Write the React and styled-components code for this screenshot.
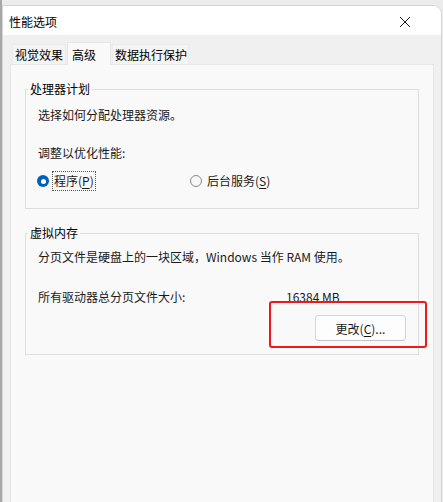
import React from "react";
import styled, { createGlobalStyle } from "styled-components";

const GlobalStyle = createGlobalStyle`
  html, body {
    margin: 0;
    padding: 0;
    background: #ececec;
  }
  body {
    font-family: "Noto Sans CJK SC", "Microsoft YaHei", sans-serif;
    font-size: 12px;
    color: #1a1a1a;
  }
`;

const Desktop = styled.div`
  width: 443px;
  height: 502px;
  box-sizing: border-box;
  padding: 6px 2px 0 3px;
  border-left: 2px solid #a8a8a8;
  overflow: hidden;
  position: relative;
`;

const Window = styled.div`
  margin-left: -2px;
  height: 100%;
  background: #f0f0f0;
  border-top-right-radius: 8px;
  box-shadow: 0 0 0 1px #d4d4d4;
  display: flex;
  flex-direction: column;
  overflow: hidden;
`;

const TitleBar = styled.div`
  height: 29px;
  box-sizing: border-box;
  padding: 2px 30px 0 6px;
  background: #ffffff;
  display: flex;
  align-items: center;
  justify-content: space-between;
  flex-shrink: 0;
`;

const Title = styled.span`
  font-size: 12px;
  line-height: 16px;
  color: #000;
`;

const CloseIcon = styled.svg`
  width: 12px;
  height: 12px;
  display: block;
`;

const Body = styled.div`
  flex: 1;
  display: flex;
  flex-direction: column;
  padding: 7px 7px 0 7px;
`;

const TabRow = styled.div`
  display: flex;
  align-items: flex-end;
  height: 22px;
  margin-left: 2px;
  position: relative;
  z-index: 1;
`;

const Tab = styled.div`
  height: ${p => (p.$active ? "23px" : "20px")};
  box-sizing: border-box;
  padding: ${p => p.$pad};
  margin-right: 1px;
  display: flex;
  align-items: center;
  font-size: 12px;
  background: ${p => (p.$active ? "#f9f9f9" : "#f4f4f4")};
  border: 1px solid ${p => (p.$active ? "#e6e6e6" : "#ebebeb")};
  border-bottom: none;
  margin-bottom: ${p => (p.$active ? "-1px" : "0")};
  color: #000;
`;

const Panel = styled.div`
  flex: 1;
  background: #f9f9f9;
  border: 1px solid #e6e6e6;
  border-bottom: none;
  padding: 16px 14px 0 14px;
  display: flex;
  flex-direction: column;
  gap: 16px;
`;

const Group = styled.fieldset`
  margin: 0;
  border: 1px solid #dedede;
  padding: ${p => p.$pad};
  display: flex;
  flex-direction: column;
  min-width: 0;
`;

const Legend = styled.legend`
  margin-left: -10px;
  padding: 0 2px;
  font-size: 12px;
  line-height: 16px;
  color: #000;
`;

const Line = styled.div`
  font-size: 12px;
  line-height: 16px;
  margin-top: ${p => p.$gap || 0}px;
  display: flex;
  align-items: center;
`;

const Label = styled.span`
  width: ${p => p.$w}px;
  flex-shrink: 0;
`;

const RadioRow = styled.div`
  display: flex;
  align-items: center;
  height: 20px;
  margin-top: 10px;
  margin-left: -1px;
`;

const RadioOption = styled.label`
  display: flex;
  align-items: center;
  gap: 3px;
  width: ${p => p.$w}px;
  flex-shrink: 0;
`;

const RadioDot = styled.span`
  width: 12px;
  height: 12px;
  box-sizing: border-box;
  border-radius: 50%;
  display: flex;
  align-items: center;
  justify-content: center;
  background: ${p => (p.$checked ? "#005fb8" : "#f7f7f7")};
  border: ${p => (p.$checked ? "none" : "1px solid #8a8a8a")};
  &::after {
    content: "";
    display: ${p => (p.$checked ? "block" : "none")};
    width: 5px;
    height: 5px;
    border-radius: 50%;
    background: #fff;
  }
`;

const RadioText = styled.span`
  padding: 1px 1px;
  line-height: 16px;
  border: 1px ${p => (p.$focus ? "dotted #555" : "solid transparent")};
`;

const Key = styled.u`
  text-underline-offset: 2px;
`;

const ButtonRow = styled.div`
  display: flex;
  justify-content: flex-end;
  margin-top: 10px;
`;

const Button = styled.button`
  width: 91px;
  height: 26px;
  background: #fdfdfd;
  border: 1px solid #d6d6d6;
  border-bottom-color: #c4c4c4;
  border-radius: 4px;
  font-family: inherit;
  font-size: 12px;
  color: #1a1a1a;
  padding: 0;
`;

const Highlight = styled.div`
  position: absolute;
  left: 267px;
  top: 301px;
  width: 158px;
  height: 47px;
  box-sizing: border-box;
  border: 2.5px solid #f21818;
  border-radius: 3px;
  pointer-events: none;
`;

const tabs = [
  { id: 1, text: "视觉效果", pad: "0 2px" },
  { id: 2, text: "高级", pad: "0 14px 0 4px", active: true },
  { id: 3, text: "数据执行保护", pad: "0 1px 0 2px" },
];

const App = () => {
  return (
    <>
      <GlobalStyle />
      <Desktop>
        <Window>
          <TitleBar>
            <Title>性能选项</Title>
            <CloseIcon viewBox="0 0 12 12">
              <path d="M1 1 L11 11 M11 1 L1 11" stroke="#1a1a1a" strokeWidth="1" fill="none" />
            </CloseIcon>
          </TitleBar>
          <Body>
            <TabRow>
              {tabs.map(t => (
                <Tab key={t.id} $active={t.active} $pad={t.pad}>
                  {t.text}
                </Tab>
              ))}
            </TabRow>
            <Panel>
              <Group $pad="10px 12px 17px 12px">
                <Legend>处理器计划</Legend>
                <Line>选择如何分配处理器资源。</Line>
                <Line $gap={22}>调整以优化性能:</Line>
                <RadioRow>
                  <RadioOption $w={153}>
                    <RadioDot $checked />
                    <RadioText $focus>
                      程序(<Key>P</Key>)
                    </RadioText>
                  </RadioOption>
                  <RadioOption>
                    <RadioDot />
                    <RadioText>
                      后台服务(<Key>S</Key>)
                    </RadioText>
                  </RadioOption>
                </RadioRow>
              </Group>
              <Group $pad="8px 12px 13px 12px">
                <Legend>虚拟内存</Legend>
                <Line>分页文件是硬盘上的一块区域，Windows 当作 RAM 使用。</Line>
                <Line $gap={24}>
                  <Label $w={248}>所有驱动器总分页文件大小:</Label>
                  <span>16384 MB</span>
                </Line>
                <ButtonRow>
                  <Button>
                    更改(<Key>C</Key>)...
                  </Button>
                </ButtonRow>
              </Group>
            </Panel>
          </Body>
        </Window>
        <Highlight />
      </Desktop>
    </>
  );
};

export default App;
